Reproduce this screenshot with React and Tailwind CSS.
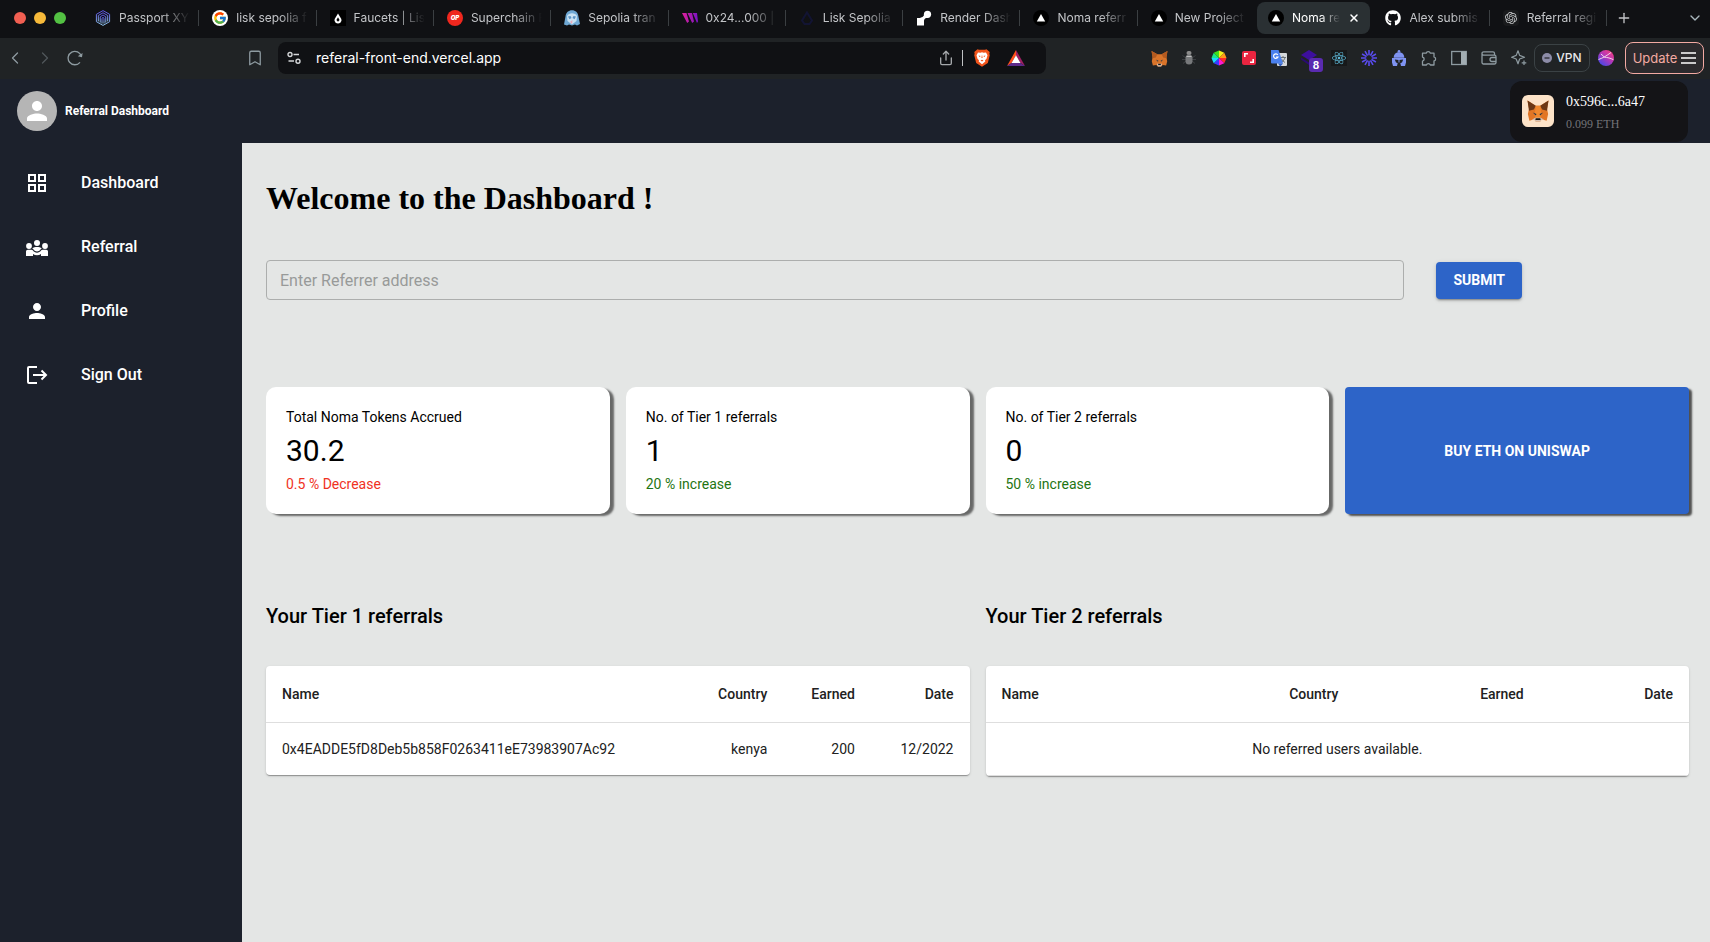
import React from "react";
import { FcGoogle } from "react-icons/fc";
import { FaGithub, FaReact } from "react-icons/fa";
import { SiOpenai } from "react-icons/si";
import { MdGridView, MdPerson } from "react-icons/md";
import { Bookmark, ChevronDown, ChevronLeft, ChevronRight, Plus, Share, X } from "lucide-react";

/* ---------- favicons ---------- */

function PassportIcon() {
  return (
    <svg viewBox="0 0 16 16" className="size-4" fill="none">
      <defs>
        <linearGradient id="passport" x1="0" y1="0" x2="0" y2="1">
          <stop offset="0" stopColor="#5b4fe0" />
          <stop offset="1" stopColor="#8fc3ea" />
        </linearGradient>
      </defs>
      <g stroke="url(#passport)" strokeWidth="1">
        <path d="M8 .6 14.6 4.3v7.4L8 15.4 1.4 11.7V4.3Z" />
        <path d="M3.3 11.4V5.5L8 2.8l4.7 2.7v5.9" />
        <path d="M5.2 12.6V6.8L8 5l2.8 1.8v5.8" />
        <path d="M7 13.6V8.2L8 7.3l1 .9v5.4" />
      </g>
    </svg>
  );
}

function GoogleIcon() {
  return (
    <span className="flex size-4 items-center justify-center rounded-full bg-white">
      <FcGoogle className="size-3.5" />
    </span>
  );
}

function FaucetIcon() {
  return (
    <svg viewBox="0 0 16 16" className="size-4">
      <rect width="16" height="16" fill="#000" />
      <path d="M8 3.4 11.3 9a2.9 2.9 0 0 1-.7 3.2 3.8 3.8 0 0 1-5.2 0A2.9 2.9 0 0 1 4.7 9Z" fill="#fff" />
      <path d="M8 7.2 9.6 10 8 11.8 6.4 10Z" fill="#000" />
    </svg>
  );
}

function OptimismIcon() {
  return (
    <span className="flex size-4 items-center justify-center rounded-full bg-[#f0271e] font-['Inter',sans-serif] text-[6px] leading-none font-black text-white italic">
      OP
    </span>
  );
}

function GhostIcon() {
  return (
    <svg viewBox="0 0 16 16" className="size-4">
      <path d="M0 14.500 1.500 6.500C2 2.500 4.500.3 8 .3s6 2.200 6.400 6L16 14l-3 1.500-2-1-3 1-3-1-2 1Z" fill="#6fa8d4" />
      <path d="M3 6c1-2 3-2.800 5-2.800S12.300 4 13 6l-.5 5L8 14.500 3.500 11Z" fill="#c9e2f3" />
      <path d="M4 6.500 6.500 6l1 2-2 1.200Zm8 0L9.500 6l-1 2 2 1.200Z" fill="#5b93c4" />
      <path d="m6 12 2.500-2-.5 4Z" fill="#e9a6b9" />
    </svg>
  );
}

function ThirdwebIcon() {
  return (
    <svg viewBox="0 0 16 16" className="size-4">
      <defs>
        <linearGradient id="thirdweb" x1="0" y1="0" x2="1" y2="0">
          <stop offset="0" stopColor="#e0219c" />
          <stop offset="1" stopColor="#7a12c4" />
        </linearGradient>
      </defs>
      <path d="M0 3h4.500L7 11.500 5.200 13Zm5.500 0H10l2 8.500-1.800 1.500Zm5.300 0H15l1 8.500-1 1.500Z" fill="url(#thirdweb)" />
    </svg>
  );
}

function LiskIcon() {
  return (
    <svg viewBox="0 0 16 16" className="size-4" fill="none" stroke="#121433" strokeWidth="2">
      <path d="M8 2.500 13 10.500 10.500 14h-5L3 10.500Z" />
    </svg>
  );
}

function RenderIcon() {
  return (
    <svg viewBox="0 0 16 16" className="size-4" fill="#fff">
      <circle cx="11.500" cy="4.300" r="3.600" />
      <path d="M4.500 7.500C7 7.500 7.500 6 8.500 4l4 3.500c-3.500.5-4.500 1.500-4.500 4v4H1V8h3.500Z" />
    </svg>
  );
}

function VercelIcon() {
  return (
    <svg viewBox="0 0 16 16" className="size-4">
      <circle cx="8" cy="8" r="8" fill="#000" />
      <path d="m8 4 4.200 7.400H3.800Z" fill="#fff" />
    </svg>
  );
}

function GithubIcon() {
  return <FaGithub className="size-4 text-white" />;
}

function OpenaiIcon() {
  return (
    <span className="flex size-4 items-center justify-center rounded bg-[#191a1c]">
      <SiOpenai className="size-3 text-[#c9cbcd]" />
    </span>
  );
}

/* ---------- toolbar drawings ---------- */

function FoxIcon({ className }) {
  return (
    <svg viewBox="0 0 32 32" className={className}>
      <path d="M2 2 13 9h6L30 2l-2 11 1.500 7-2 9-6.500-2-2 3h-6l-2-3-6.500 2-2-9L4 13Z" fill="#e27625" />
      <path d="m2 2 11 7-2.500 5L4 15.500Zm28 0L19 9l2.500 5 6.500 1.500Z" fill="#6b3715" />
      <path d="M13 9h6l1.500 12-1.500 5h-6l-1.500-5Z" fill="#f0892f" />
      <path d="m9 18 5 2-1 2Zm14 0-5 2 1 2Z" fill="#233447" />
      <path d="m8 27.500 4-2.500h8l4 2.500-3.500.5-1.500 2h-6l-1.500-2Z" fill="#d7c1b3" />
      <path d="M13 25.500h6l.5 2.500h-7Z" fill="#161616" />
    </svg>
  );
}

function ToolbarFoxIcon() {
  return (
    <svg viewBox="0 0 32 32" className="size-[17px]">
      <path d="M1 2 12 8h8L31 2l-2 11 1.500 8-2 8-6.500-1-2.500 3h-7L10 28l-6.500 1-2-8L3 13Z" fill="#d9742a" />
      <path d="m1 2 11 6-3 6-6 1.500Zm30 0L20 8l3 6 6 1.500Z" fill="#b35a20" />
      <path d="m9 18 5 2-1 2Zm14 0-5 2 1 2Z" fill="#233447" />
      <path d="M11 26h10l-2 5h-6Z" fill="#d7c1b3" />
      <path d="M13.500 26h5v2.500h-5Z" fill="#161616" />
    </svg>
  );
}

function BugIcon() {
  return (
    <svg viewBox="0 0 16 16" className="size-4">
      <path d="M1.500 5.500 5 8M1 9.500h4M2 13.500 5 11M14.500 5.500 11 8m4 1.500h-4m3 4L11 11" stroke="#3c3f42" fill="none" />
      <rect x="5.500" y="1" width="5" height="4" rx="2" fill="#8b8b8b" />
      <rect x="4.500" y="4.500" width="7" height="10" rx="3.500" fill="#77797b" />
      <path d="M5.500 6.500h5" stroke="#bdbdbd" strokeWidth="1" />
    </svg>
  );
}

function ColorWheelIcon() {
  return (
    <svg viewBox="0 0 16 16" className="size-4">
      <path d="M8 8V.5l5.300 2.200Z" fill="#f2f21a" />
      <path d="m8 8 5.300-5.300L15.500 8Z" fill="#ff9a1a" />
      <path d="M8 8h7.500l-2.200 5.300Z" fill="#ff2b2b" />
      <path d="m8 8 5.300 5.300L8 15.500Z" fill="#ff1ad0" />
      <path d="M8 8v7.500l-5.300-2.200Z" fill="#3a3aff" />
      <path d="m8 8-5.300 5.300L.5 8Z" fill="#1ad5ff" />
      <path d="M8 8H.5l2.200-5.300Z" fill="#1ae68a" />
      <path d="M8 8 2.700 2.700 8 .5Z" fill="#3fe01a" />
    </svg>
  );
}

function CaptureIcon() {
  return (
    <svg viewBox="0 0 16 16" className="size-4">
      <rect x="1" y="1" width="14" height="14" rx="2" fill="#ea2540" />
      <path d="M3.800 7V3.800H7M9 12.200h3.200V9" stroke="#fff" strokeWidth="1.600" fill="none" />
    </svg>
  );
}

function TranslateIcon() {
  return (
    <svg viewBox="0 0 18 18" className="size-[18px]">
      <rect x="7" y="4" width="10" height="13" rx="1" fill="#d5d8db" />
      <path d="M10.500 8.500h5.500M13 7v1.500m2 0c-.5 2-1.800 3.500-3 4.500m-.5-3c.8 1.500 2 2.500 3.500 3.500" stroke="#6d7479" fill="none" />
      <path d="M1 1h7.500L13 14.500H2a1 1 0 0 1-1-1Z" fill="#4a80ee" />
      <path d="m8 14.500 5 0-2.800 3Z" fill="#2f5cc0" />
      <path d="M7.800 5.800A2.300 2.300 0 1 0 8 8H6" stroke="#fff" strokeWidth="1.200" fill="none" />
    </svg>
  );
}

function LayersIcon() {
  return (
    <span className="relative flex size-4">
      <svg viewBox="0 0 16 16" className="size-4">
        <path d="m8 0 8 5-8 5-8-5Z" fill="#3d0f9e" />
        <path d="m0 7.500 8 5 8-5v2L8 15 0 9.500Z" fill="#2a0a75" />
      </svg>
      <span className="absolute top-2 left-2 flex size-3.5 items-center justify-center rounded-[3px] bg-[#5a2bb0] text-[10px] leading-none font-bold text-white">
        8
      </span>
    </span>
  );
}

function ReactLogo() {
  return (
    <span className="flex size-4 items-center justify-center bg-[#17191a]">
      <FaReact className="size-3.5 text-[#5db7d6]" />
    </span>
  );
}

function LoomIcon() {
  return (
    <svg viewBox="0 0 16 16" className="size-4" stroke="#5a4cf0" strokeWidth="1.600">
      {[0, 30, 60, 90, 120, 150].map((angle) => (
        <path key={angle} d="M8 0v5.200M8 10.800V16" transform={`rotate(${angle} 8 8)`} />
      ))}
    </svg>
  );
}

function HelmetIcon() {
  return (
    <svg viewBox="0 0 16 16" className="size-4">
      <g fill="#7f93f2">
        <circle cx="8" cy="1.300" r="1.300" />
        <path d="M8 2.200c3.600 0 5.300 2.400 5.300 5.600H2.700C2.700 4.600 4.400 2.200 8 2.200Z" />
        <path d="M1 8h14v4.500l-1 3.500h-4l-.8-3.500H6.800L6 16H2l-1-3.500Z" />
      </g>
      <path d="M3.800 9.500 7.500 10v3h-1L5 12.500Zm8.400 0L8.500 10v3h1l1.500-.5Z" fill="#202325" />
    </svg>
  );
}

function PuzzleIcon() {
  return (
    <svg viewBox="0 0 16 16" className="size-4" fill="none" stroke="#8e9ba1" strokeWidth="1.300" strokeLinejoin="round">
      <path d="M1.500 3.200h3.700a2.100 2.100 0 0 1 4.100 0h3.700v3.700a2.100 2.100 0 0 1 0 4.100v4H9.400a2.100 2.100 0 0 0-4 0H1.500v-3.900a2.100 2.100 0 0 0 0-4.100Z" />
    </svg>
  );
}

function SidePanelIcon() {
  return (
    <svg viewBox="0 0 16 16" className="size-4">
      <rect x=".7" y="1.500" width="14.600" height="13" fill="none" stroke="#8e9ba1" strokeWidth="1.300" />
      <rect x="10" y="1.500" width="5.300" height="13" fill="#a2adb2" />
    </svg>
  );
}

function WalletIcon() {
  return (
    <svg viewBox="0 0 16 16" className="size-4" fill="none" stroke="#8e9ba1" strokeWidth="1.300" strokeLinejoin="round">
      <path d="M1 3.500c0-1 .7-1.700 1.700-1.700H12a1.500 1.500 0 0 1 1.500 1.500v1.900M1 3.500c0 1 .7 1.700 1.700 1.700H13.500a1.500 1.500 0 0 1 1.500 1.500v5.800a1.500 1.500 0 0 1-1.500 1.500h-11A1.500 1.500 0 0 1 1 12.500Z" />
      <path d="M15 7.500h-4a2 2 0 0 0 0 4h4" />
    </svg>
  );
}

function SparkIcon() {
  return (
    <svg viewBox="0 0 16 16" className="size-4" fill="none" stroke="#8e9ba1" strokeWidth="1.200" strokeLinejoin="round">
      <path d="M7 .8 8.600 5.400 13.500 7.200 8.600 9 7 13.800 5.200 9 .6 7.200 5.200 5.400Z" />
      <path d="M13 10.500v4.600M10.700 12.800h4.600" />
    </svg>
  );
}

function ReloadIcon() {
  return (
    <svg viewBox="0 0 16 16" className="size-4" fill="none" stroke="#8e9ba1" strokeWidth="1.300">
      <path d="M14.300 6.300A6.700 6.700 0 1 0 13 12.300" />
      <path d="m15.600 3-.6 4.300-4.200-1Z" fill="#8e9ba1" stroke="none" />
    </svg>
  );
}

function SiteSettingsIcon() {
  return (
    <svg viewBox="0 0 14 14" className="size-3.5" fill="none" stroke="#d5d7d9" strokeWidth="1.400">
      <circle cx="3" cy="3.500" r="2" />
      <path d="M6.500 3.500H12M1.500 10H7" />
      <circle cx="11" cy="10.200" r="2" />
    </svg>
  );
}

function BraveIcon() {
  return (
    <svg viewBox="0 0 16 18" className="h-[18px] w-4">
      <path d="m3.500.3 1.500.4h6l1.500-.4L15.700 3l-.4 2 .5 1-2 8L8 17.800 2.200 14l-2-8 .5-1-.4-2Z" fill="#f2541b" />
      <path d="M4 3.500 6.500 3.800 8 3.300 9.500 3.800l2.500-.3 1.500 2.700-1 3.500-1.500 1.500.3 1.300L8 15.200 4.700 12.500 5 11.200 3.500 9.700l-1-3.500Z" fill="#fff" />
      <path d="m4.500 6.500 2.300.6-1.300 1ZM11.500 6.500l-2.300.6 1.300 1ZM6.500 11.500 8 10.700l1.500.8L8 12.600ZM8 5.500 8.600 9H7.400Z" fill="#f2541b" />
    </svg>
  );
}

function RewardsIcon() {
  return (
    <svg viewBox="0 0 18 16" className="h-4 w-[18px]">
      <path d="M9 0v5.500L4.500 13 0 16Z" fill="#ff4f1c" />
      <path d="M9 0v5.500l4.500 7.500L18 16Z" fill="#9e1f63" />
      <path d="m0 16 4.500-3h9L18 16Z" fill="#5d2b8a" />
      <path d="m9 5.300 4.500 7.700h-9Z" fill="#fff" />
    </svg>
  );
}

function AssistantOrb() {
  return (
    <svg viewBox="0 0 16 16" className="size-4">
      <defs>
        <linearGradient id="orb" x1="1" y1="0" x2="0.200" y2="1">
          <stop offset="0" stopColor="#ff3f72" />
          <stop offset=".5" stopColor="#b637b9" />
          <stop offset="1" stopColor="#3f49e8" />
        </linearGradient>
      </defs>
      <circle cx="8" cy="8" r="8" fill="url(#orb)" />
      <path d="M.5 9.500C5 8 9 5.500 13 2.500M3 4l3.500 3.200c3 .2 6 1 9 2.500" stroke="#f6d3ea" strokeWidth="1" fill="none" />
    </svg>
  );
}

/* ---------- sidebar drawings ---------- */

function TeamIcon() {
  return (
    <svg viewBox="0 0 24 24" className="size-6" fill="#fff">
      <circle cx="4" cy="11" r="2.900" />
      <circle cx="20" cy="11" r="2.900" />
      <circle cx="12" cy="8" r="3" />
      <path d="M1 21v-4.500c0-1 .8-1.800 1.800-1.800h3.600c.7 0 1.200.3 1.600.9.900 1.400 2.300 2.100 4 2.100s3.100-.7 4-2.100c.4-.6.900-.9 1.600-.9h3.600c1 0 1.800.8 1.800 1.800V21h-7v-2c-1.200.8-2.500 1.200-4 1.200S9.200 19.800 8 19v2Z" />
      <path d="M12 12c1.800 0 3.500.4 4.800 1.200-.6.400-1.100.9-1.500 1.500-.8 1.100-1.900 1.700-3.300 1.700s-2.500-.6-3.300-1.700c-.4-.6-.9-1.100-1.500-1.500C8.500 12.400 10.200 12 12 12Z" />
    </svg>
  );
}

function ExitIcon() {
  return (
    <svg viewBox="0 0 24 24" className="size-6" fill="none" stroke="#fff" strokeWidth="2">
      <path d="M12 4H4a1 1 0 0 0-1 1v14a1 1 0 0 0 1 1h8" />
      <path d="M8 12h13.500M16.500 7.500 21 12l-4.500 4.500" />
    </svg>
  );
}

/* ---------- data ---------- */

const tabs = [
  { title: "Passport XYZ", icon: PassportIcon, divider: true },
  { title: "lisk sepolia f", icon: GoogleIcon, divider: true },
  { title: "Faucets | Lisk", icon: FaucetIcon, divider: true },
  { title: "Superchain F", icon: OptimismIcon, divider: true },
  { title: "Sepolia tran", icon: GhostIcon, divider: true },
  { title: "0x24...000 |", icon: ThirdwebIcon, divider: true },
  { title: "Lisk Sepolia", icon: LiskIcon, divider: true },
  { title: "Render Dash", icon: RenderIcon, divider: true },
  { title: "Noma referr", icon: VercelIcon, divider: true },
  { title: "New Project", icon: VercelIcon },
  { title: "Noma re", icon: VercelIcon, active: true },
  { title: "Alex submis", icon: GithubIcon, divider: true },
  { title: "Referral regi", icon: OpenaiIcon, divider: true },
];

const extensions = [
  { label: "Wallet extension", icon: <ToolbarFoxIcon /> },
  { label: "Bug finder", icon: <BugIcon /> },
  { label: "Color picker", icon: <ColorWheelIcon /> },
  { label: "Screen capture", icon: <CaptureIcon /> },
  { label: "Translate", icon: <TranslateIcon /> },
  { label: "Layers", icon: <LayersIcon /> },
  { label: "React tools", icon: <ReactLogo /> },
  { label: "Recorder", icon: <LoomIcon /> },
  { label: "Helmet", icon: <HelmetIcon /> },
  { label: "Extensions", icon: <PuzzleIcon /> },
  { label: "Side panel", icon: <SidePanelIcon /> },
  { label: "Wallet", icon: <WalletIcon /> },
  { label: "Assistant", icon: <SparkIcon /> },
];

const navItems = [
  { label: "Dashboard", icon: <MdGridView className="size-6" /> },
  { label: "Referral", icon: <TeamIcon /> },
  { label: "Profile", icon: <MdPerson className="size-6" /> },
  { label: "Sign Out", icon: <ExitIcon /> },
];

const stats = [
  { label: "Total Noma Tokens Accrued", value: "30.2", change: "0.5 % Decrease", tone: "text-[#f0321e]" },
  { label: "No. of Tier 1 referrals", value: "1", change: "20 % increase", tone: "text-[#1f7512]" },
  { label: "No. of Tier 2 referrals", value: "0", change: "50 % increase", tone: "text-[#1f7512]" },
];

const tierOne = [
  { name: "0x4EADDE5fD8Deb5b858F0263411eE73983907Ac92", country: "kenya", earned: "200", date: "12/2022" },
];

/* ---------- sections ---------- */

function TabStrip() {
  return (
    <div className="flex h-[38px] items-center bg-[#101114] pb-0.5 pl-[14px]">
      <div className="flex w-[68px] shrink-0 gap-2">
        <span className="size-3 rounded-full bg-[#f15f52]" />
        <span className="size-3 rounded-full bg-[#f6b93a]" />
        <span className="size-3 rounded-full bg-[#53c143]" />
      </div>
      <div className="grid h-full min-w-0 flex-1 grid-cols-[repeat(13,minmax(0,1fr))] items-center">
        {tabs.map((tab, i) => {
          const Icon = tab.icon;
          return (
            <div
              key={i}
              className={
                tab.active
                  ? "mx-0.5 flex h-8 items-center gap-2 rounded-lg bg-[#2a3033] pr-2.5 pl-[11px]"
                  : "flex h-8 items-center gap-2 pl-[13px]"
              }
            >
              <span className="shrink-0">
                <Icon />
              </span>
              <span
                className={
                  "min-w-0 flex-1 overflow-hidden [mask-image:linear-gradient(to_right,black_60%,transparent)] text-xs leading-4 whitespace-nowrap " +
                  (tab.active ? "text-white" : "text-[#c3c5c8]")
                }
              >
                {tab.title}
              </span>
              {tab.active ? (
                <button aria-label="Close tab" className="shrink-0 text-white">
                  <X className="size-3" strokeWidth={3} />
                </button>
              ) : (
                <span className={"h-4 w-px shrink-0 " + (tab.divider ? "bg-[#3b3f42]" : "")} />
              )}
            </div>
          );
        })}
      </div>
      <button aria-label="New tab" className="ml-[9px] shrink-0 text-[#c3c5c8]">
        <Plus className="size-4" strokeWidth={2} />
      </button>
      <button aria-label="Search tabs" className="mr-[7px] flex w-[71px] shrink-0 justify-end text-[#aab8be]">
        <ChevronDown className="size-4" strokeWidth={2} />
      </button>
    </div>
  );
}

function Toolbar() {
  return (
    <div className="flex h-[41px] items-center bg-[#202325] pr-1.5 pb-px">
      <div className="flex w-[278px] shrink-0 items-center text-[#8e9ba1]">
        <button aria-label="Back" className="flex w-[30px] justify-center">
          <ChevronLeft className="size-5" strokeWidth={1.500} />
        </button>
        <button aria-label="Forward" className="flex w-[30px] justify-center text-[#50575b]">
          <ChevronRight className="size-5" strokeWidth={1.500} />
        </button>
        <button aria-label="Reload" className="flex w-[30px] justify-center">
          <ReloadIcon />
        </button>
        <button aria-label="Bookmark" className="mr-[14px] ml-auto">
          <Bookmark className="size-[18px]" strokeWidth={1.700} />
        </button>
      </div>
      <div className="flex h-8 min-w-0 flex-1 items-center rounded-lg bg-[#101114] pr-[21px] pl-[9px]">
        <SiteSettingsIcon />
        <input
          aria-label="Address"
          defaultValue="referal-front-end.vercel.app"
          className="ml-[15px] min-w-0 flex-1 bg-transparent text-sm text-white outline-none"
        />
        <button aria-label="Share" className="text-[#a5a8ab]">
          <Share className="size-4" strokeWidth={2} />
        </button>
        <span className="mx-2 h-4 w-px bg-[#c0c2c4]" />
        <button aria-label="Shields" className="ml-[3px]">
          <BraveIcon />
        </button>
        <button aria-label="Rewards" className="ml-[17px]">
          <RewardsIcon />
        </button>
      </div>
      <div className="ml-[98px] flex shrink-0 items-center">
        {extensions.map((item) => (
          <button key={item.label} aria-label={item.label} className="flex w-[30px] justify-center">
            {item.icon}
          </button>
        ))}
        <button className="flex h-7 w-14 items-center justify-center gap-1 rounded-lg border border-[#3b4245] text-xs leading-4 font-medium text-[#e8e8ea]">
          <svg viewBox="0 0 10 10" className="size-2.5">
            <circle cx="5" cy="5" r="5" fill="#8d8ca8" />
            <path d="M2.500 5h5" stroke="#202325" strokeWidth="1.200" />
          </svg>
          VPN
        </button>
        <button aria-label="Profile orb" className="ml-2">
          <AssistantOrb />
        </button>
        <button className="ml-[11px] flex h-8 w-[79px] items-center justify-center gap-1 rounded-lg border border-[#f3aaa3] bg-[#2c2a2d] text-[13px] leading-4 text-[#f3aaa3]">
          Update
          <svg viewBox="0 0 15 12" className="h-3 w-[15px]" stroke="#fff" strokeWidth="1.300">
            <path d="M0 1h15M0 6h15M0 11h15" />
          </svg>
        </button>
      </div>
    </div>
  );
}

function ReferralTable({ rows, label }) {
  return (
    <div className="overflow-hidden rounded bg-white shadow-[0_2px_1px_-1px_rgba(0,0,0,0.2),0_1px_1px_0_rgba(0,0,0,0.14),0_1px_3px_0_rgba(0,0,0,0.12)]">
      <table aria-label={label} className="w-full text-sm text-[#212121]">
        <thead>
          <tr className="border-b border-[#dedede] leading-6">
            <th className="p-4 text-left font-medium">Name</th>
            <th className="p-4 text-right font-medium">Country</th>
            <th className="p-4 text-right font-medium">Earned</th>
            <th className="p-4 text-right font-medium">Date</th>
          </tr>
        </thead>
        <tbody className="leading-5">
          {rows.length === 0 ? (
            <tr className="border-b border-[#dedede]">
              <td colSpan={4} className="p-4 text-center">
                No referred users available.
              </td>
            </tr>
          ) : (
            rows.map((row) => (
              <tr key={row.name}>
                <td className="p-4">{row.name}</td>
                <td className="p-4 text-right">{row.country}</td>
                <td className="p-4 text-right">{row.earned}</td>
                <td className="p-4 text-right">{row.date}</td>
              </tr>
            ))
          )}
        </tbody>
      </table>
    </div>
  );
}

export default function App() {
  return (
    <div className="flex min-h-screen flex-col bg-[#1c212c] font-['Roboto',sans-serif]">
      <div className="font-['Inter',sans-serif]">
        <TabStrip />
        <Toolbar />
      </div>

      <header className="flex h-16 items-center justify-between pr-[22px] pl-[17px]">
        <div className="flex items-center gap-2">
          <span className="flex size-10 items-center justify-center rounded-full bg-[#b5b5b5]">
            <MdPerson className="size-[30px] text-white" />
          </span>
          <span className="text-xs leading-4 font-bold text-white">Referral Dashboard</span>
        </div>
        <button className="flex h-[61px] w-[178px] items-center gap-3 rounded-xl bg-[#141417] pl-3 text-left font-['Liberation_Serif',serif]">
          <span className="flex size-8 items-center justify-center rounded-md bg-[#fde3c8]">
            <FoxIcon className="size-6" />
          </span>
          <span className="flex flex-col gap-1 pt-[3px]">
            <span className="text-sm leading-[18px] text-white">0x596c...6a47</span>
            <span className="text-xs leading-[18px] text-[#737378]">0.099 ETH</span>
          </span>
        </button>
      </header>

      <div className="flex flex-1">
        <nav className="w-[242px] shrink-0 pt-2">
          {navItems.map((item) => (
            <a key={item.label} href="#" className="flex h-16 items-center gap-8 pl-[25px] text-base font-medium text-white">
              {item.icon}
              {item.label}
            </a>
          ))}
        </nav>

        <main className="min-w-0 flex-1 bg-[#e4e6e5] pt-[35px] pr-[21px] pl-6 text-black">
          <h1 className="font-['Liberation_Serif',serif] text-[32px] leading-10 font-bold">Welcome to the Dashboard !</h1>

          <form className="mt-[42px] flex items-center gap-8" onSubmit={(e) => e.preventDefault()}>
            <input
              aria-label="Referrer address"
              placeholder="Enter Referrer address"
              className="h-10 w-4/5 rounded border border-[#acaead] bg-transparent px-[13px] text-base placeholder:text-[#989a99]"
            />
            <button className="h-[37px] rounded bg-[#2d64c8] px-[17px] text-sm font-bold text-white shadow-[0_3px_1px_-2px_rgba(0,0,0,0.2),0_2px_2px_0_rgba(0,0,0,0.14),0_1px_5px_0_rgba(0,0,0,0.12)]">
              SUBMIT
            </button>
          </form>

          <section className="mt-[87px] grid grid-cols-4 gap-4">
            {stats.map((stat) => (
              <div key={stat.label} className="rounded-[10px] bg-white p-5 shadow-[4px_2px_2px_rgba(0,0,0,0.55)]">
                <p className="text-sm leading-5">{stat.label}</p>
                <p className="text-[30px] leading-[47px]">{stat.value}</p>
                <p className={"text-sm leading-5 " + stat.tone}>{stat.change}</p>
              </div>
            ))}
            <button className="rounded bg-[#2d64c8] text-sm font-bold text-white shadow-[3px_2px_2px_rgba(0,0,0,0.65)]">
              BUY ETH ON UNISWAP
            </button>
          </section>

          <div className="mt-[88px] grid grid-cols-2 items-start gap-4 pb-10">
            <section>
              <h2 className="mb-9 text-xl leading-7 font-medium">Your Tier 1 referrals</h2>
              <ReferralTable rows={tierOne} label="Tier 1 referrals" />
            </section>
            <section>
              <h2 className="mb-9 text-xl leading-7 font-medium">Your Tier 2 referrals</h2>
              <ReferralTable rows={[]} label="Tier 2 referrals" />
            </section>
          </div>
        </main>
      </div>
    </div>
  );
}
